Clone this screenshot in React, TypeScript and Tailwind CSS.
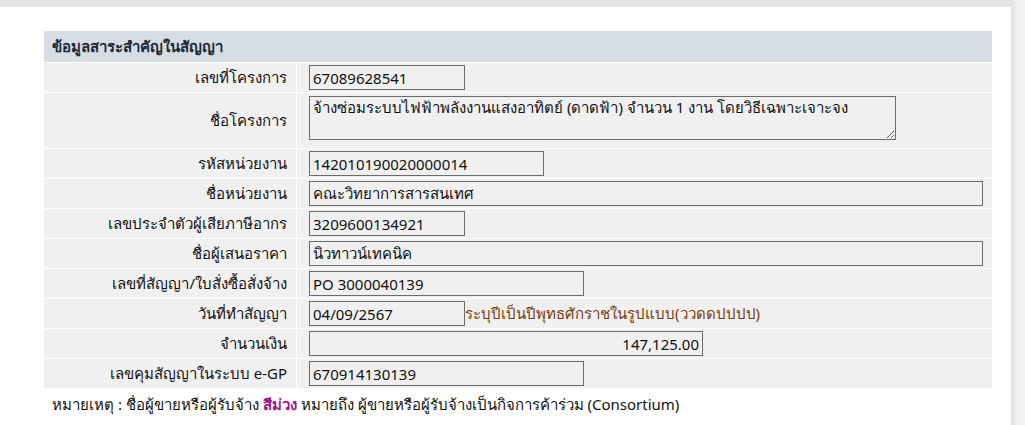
import React from "react";

const font = { fontFamily: "Tahoma, 'Noto Sans', 'Liberation Sans', 'DejaVu Sans', sans-serif" };

function Label({ children, tall }: { children: React.ReactNode; tall?: boolean }) {
  return (
    <div className={`bg-[#f0f0f0] flex items-center justify-end pr-[9px] text-[15px] text-[#111] ${tall ? "h-[55px]" : "h-[29px]"}`}>
      {children}
    </div>
  );
}

function Input({ value, w, right }: { value: string; w: string; right?: boolean }) {
  return (
    <input
      readOnly
      value={value}
      style={font}
      className={`${w} h-[25px] border border-[#6b6b6b] bg-[#f0f0f0] px-[3px] text-[15px] text-[#111] outline-none ${right ? "text-right" : ""}`}
    />
  );
}

function Value({ children }: { children: React.ReactNode }) {
  return <div className="bg-[#f0f0f0] h-[29px] flex items-center pl-[12px]">{children}</div>;
}

export default function App() {
  return (
    <div style={font} className="relative w-[1025px] h-[425px] bg-white overflow-hidden">
      <div className="h-[7px] w-[1012px] bg-[#e3e4e6]" />
      <div className="absolute right-0 top-0 h-full w-[14px] bg-gradient-to-r from-[#e2e2e2] via-[#f1f1f1] to-[#f3f3f3]" />
      <div className="ml-[44px] mt-[24px] w-[948px]">
        <div className="h-[31px] bg-[#d6dde5] flex items-center pl-[8px] text-[15px] font-bold text-[#1e2a36]">
          ข้อมูลสาระสำคัญในสัญญา
        </div>
        <div className="grid grid-cols-[252px_1fr] gap-[1px] bg-white pt-[1px]">
          <Label>เลขที่โครงการ</Label>
          <Value><Input value="67089628541" w="w-[156px]" /></Value>

          <Label tall>ชื่อโครงการ</Label>
          <div className="bg-[#f0f0f0] h-[55px] flex items-start pl-[12px] pt-[3px]">
            <textarea
              readOnly
              style={font}
              className="w-[587px] h-[44px] border border-[#6b6b6b] bg-[#f0f0f0] px-[3px] py-0 text-[15px] leading-[20px] text-[#111] outline-none resize"
              value="จ้างซ่อมระบบไฟฟ้าพลังงานแสงอาทิตย์ (ดาดฟ้า) จำนวน 1 งาน โดยวิธีเฉพาะเจาะจง"
            />
          </div>

          <Label>รหัสหน่วยงาน</Label>
          <Value><Input value="142010190020000014" w="w-[235px]" /></Value>

          <Label>ชื่อหน่วยงาน</Label>
          <Value><Input value="คณะวิทยาการสารสนเทศ" w="w-[674px]" /></Value>

          <Label>เลขประจำตัวผู้เสียภาษีอากร</Label>
          <Value><Input value="3209600134921" w="w-[156px]" /></Value>

          <Label>ชื่อผู้เสนอราคา</Label>
          <Value><Input value="นิวทาวน์เทคนิค" w="w-[674px]" /></Value>

          <Label>เลขที่สัญญา/ใบสั่งซื้อสั่งจ้าง</Label>
          <Value><Input value="PO 3000040139" w="w-[275px]" /></Value>

          <Label>วันที่ทำสัญญา</Label>
          <Value>
            <Input value="04/09/2567" w="w-[156px]" />
            <span className="text-[15px] text-[#7a3b0c]">ระบุปีเป็นปีพุทธศักราชในรูปแบบ(ววดดปปปป)</span>
          </Value>

          <Label>จำนวนเงิน</Label>
          <Value><Input value="147,125.00" w="w-[394px]" right /></Value>

          <Label>เลขคุมสัญญาในระบบ e-GP</Label>
          <Value><Input value="670914130139" w="w-[275px]" /></Value>
        </div>
        <div className="pl-[8px] pt-[5px] text-[15px] text-[#111]">
          หมายเหตุ : ชื่อผู้ขายหรือผู้รับจ้าง <span className="font-bold text-[#a0168f]">สีม่วง</span> หมายถึง ผู้ขายหรือผู้รับจ้างเป็นกิจการค้าร่วม (Consortium)
        </div>
      </div>
    </div>
  );
}
